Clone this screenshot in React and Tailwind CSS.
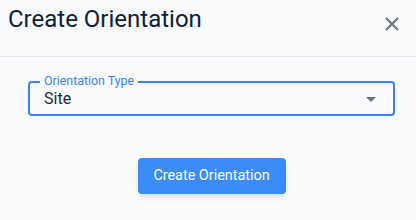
export default function App() {
  return (
    <div className="w-[416px] h-[220px] bg-[#f8fafc] overflow-hidden" style={{ fontFamily: "Roboto, 'Liberation Sans', sans-serif" }}>
      <div className="h-[57px] flex items-start justify-between border-b border-[#e5e7eb] pl-[8px] pr-[17px]">
        <h1 className="text-[24px] leading-[28px] mt-[5px] text-[#0f2135] font-normal">Create Orientation</h1>
        <svg className="mt-[17px]" width="14" height="14" viewBox="0 0 14 14" fill="none" stroke="#6b7280" strokeWidth="2">
          <path d="M1 1 L13 13 M13 1 L1 13" />
        </svg>
      </div>
      <div className="pl-[28px] pr-[21px] pt-[24px]">
        <div className="relative h-[35px] border-2 border-[#3b82f6] rounded-[4px] flex items-center pl-[14px] pr-[17px] justify-between">
          <span className="absolute -top-[9px] left-[10px] px-[4px] bg-[#f8fafc] text-[12.4px] leading-[14px] text-[#3b82f6]">Orientation Type</span>
          <span className="text-[16px] text-[#1f2937] mt-[1px]">Site</span>
          <svg width="10" height="5" viewBox="0 0 10 5" className="mt-[1px]">
            <path d="M0 0 L10 0 L5 5 Z" fill="#6b7280" />
          </svg>
        </div>
        <div className="flex justify-center pt-[42px]">
          <button className="w-[148px] h-[36px] rounded-[4px] bg-[#3b8bf8] text-white text-[14.4px] shadow-md">Create Orientation</button>
        </div>
      </div>
    </div>
  );
}
